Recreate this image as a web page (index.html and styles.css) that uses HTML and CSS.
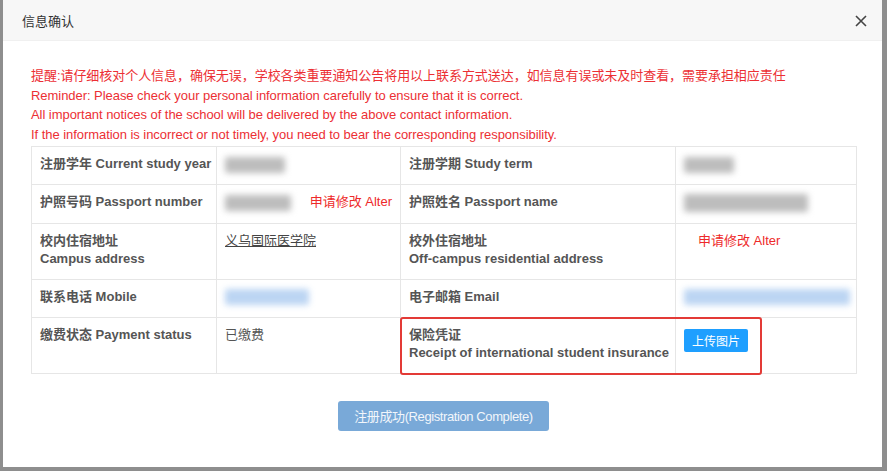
FILE: index.html
```html
<!DOCTYPE html>
<html lang="zh-CN">
<head>
    <meta charset="UTF-8">
    <meta name="viewport" content="width=device-width, initial-scale=1.0">
    <title>信息确认</title>
    <link rel="stylesheet" href="styles.css">
</head>
<body>
    <div class="dialog">
        <div class="dialog-header">
            <span class="dialog-title">信息确认</span>
            <span class="dialog-close">
                <svg width="12" height="12" viewBox="0 0 12 12"><path d="M1 1L11 11M11 1L1 11" stroke="#444" stroke-width="1.6" fill="none"/></svg>
            </span>
        </div>
        <div class="dialog-body">
            <div class="tips">
                <p>提醒:请仔细核对个人信息，确保无误，学校各类重要通知公告将用以上联系方式送达，如信息有误或未及时查看，需要承担相应责任</p>
                <p>Reminder: Please check your personal information carefully to ensure that it is correct.</p>
                <p>All important notices of the school will be delivered by the above contact information.</p>
                <p>If the information is incorrect or not timely, you need to bear the corresponding responsibility.</p>
            </div>
            <div class="table-wrap">
                <table class="info-table">
                    <colgroup>
                        <col class="c1"><col class="c2"><col class="c3"><col class="c4">
                    </colgroup>
                    <tr>
                        <th>注册学年 Current study year</th>
                        <td><span class="blur grey w60"></span></td>
                        <th>注册学期 Study term</th>
                        <td><span class="blur grey w50"></span></td>
                    </tr>
                    <tr>
                        <th>护照号码 Passport number</th>
                        <td class="split"><span class="blur grey w68"></span><a class="alter">申请修改 Alter</a></td>
                        <th>护照姓名 Passport name</th>
                        <td><span class="blur grey w122 tall"></span></td>
                    </tr>
                    <tr>
                        <th>校内住宿地址<br>Campus address</th>
                        <td><a class="campus">义乌国际医学院</a></td>
                        <th>校外住宿地址<br>Off-campus residential address</th>
                        <td><a class="alter indent">申请修改 Alter</a></td>
                    </tr>
                    <tr>
                        <th>联系电话 Mobile</th>
                        <td><span class="blur blue w84"></span></td>
                        <th>电子邮箱 Email</th>
                        <td><span class="blur blue w166"></span></td>
                    </tr>
                    <tr>
                        <th>缴费状态 Payment status</th>
                        <td class="plain">已缴费</td>
                        <th>保险凭证<br>Receipt of international student insurance</th>
                        <td><button class="upload-btn">上传图片</button></td>
                    </tr>
                </table>
                <div class="highlight"></div>
            </div>
            <div class="actions">
                <button class="submit-btn" disabled>注册成功(Registration Complete)</button>
            </div>
        </div>
    </div>
</body>
</html>
```

FILE: styles.css
```css
body {
    margin: 0;
    background-color: #8e8e8e;
    font-family: "Liberation Sans", Arial, "Noto Sans CJK SC", sans-serif;
}
.dialog {
    width: 879px;
    height: 467px;
    margin-left: 3px;
    background-color: #fff;
    overflow: hidden;
}
.dialog-header {
    height: 41px;
    display: flex;
    align-items: center;
    justify-content: space-between;
    padding: 0 15px 0 19px;
    background-color: #f7f7f7;
    border-bottom: 1px solid #f0f0f0;
    box-sizing: border-box;
}
.dialog-title {
    font-size: 13px;
    color: #333;
}
.dialog-close {
    display: flex;
    margin-top: 1px;
}
.dialog-body {
    padding: 25px 26px 0 28px;
}
.tips p {
    margin: 0;
    font-size: 13px;
    line-height: 19.5px;
    color: #ec2f34;
    letter-spacing: -0.05px;
}
.table-wrap {
    position: relative;
    margin-top: 2px;
}
.info-table {
    border-collapse: collapse;
    table-layout: fixed;
    width: 825px;
}
.c1 { width: 185px; }
.c2 { width: 184px; }
.c3 { width: 275px; }
.c4 { width: 181px; }
.info-table th,
.info-table td {
    border: 1px solid #e6e6e6;
    padding: 8px 8px 11px;
    font-size: 13px;
    line-height: 18px;
    text-align: left;
    vertical-align: top;
    color: #555;
    white-space: nowrap;
}
.info-table th {
    font-weight: bold;
}
.info-table td.plain {
    font-weight: normal;
}
.split .alter {
    float: right;
}
.alter {
    color: #ee2a2a;
    font-size: 13px;
}
.alter.indent {
    margin-left: 14px;
}
.campus {
    color: #444;
    text-decoration: underline;
}
.blur {
    display: inline-block;
    height: 16px;
    vertical-align: middle;
    filter: blur(3px);
    border-radius: 2px;
}
.blur.grey { background-color: #bdbdbd; }
.blur.blue { background-color: #bcd5f3; }
.blur.tall { height: 18px; }
.w50 { width: 50px; }
.w60 { width: 60px; }
.w68 { width: 66px; }
.w84 { width: 84px; }
.w122 { width: 124px; }
.w166 { width: 166px; }
.upload-btn {
    margin-top: 3px;
    height: 23px;
    padding: 0 8px;
    border: none;
    border-radius: 2px;
    background-color: #1e9fff;
    color: #fff;
    font-size: 12px;
    font-family: inherit;
}
.highlight {
    position: absolute;
    left: 369px;
    top: 171px;
    width: 358px;
    height: 54px;
    border: 2px solid #e33a36;
    border-radius: 3px;
}
.actions {
    display: flex;
    justify-content: center;
    margin-top: 27px;
}
.submit-btn {
    height: 30px;
    width: 211px;
    padding: 0;
    border: none;
    border-radius: 3px;
    background-color: #79a9d8;
    color: #f2f6fb;
    font-size: 13px;
    letter-spacing: -0.4px;
    white-space: nowrap;
    font-family: "Liberation Sans", Arial, "Noto Sans CJK SC", sans-serif;
}
```
